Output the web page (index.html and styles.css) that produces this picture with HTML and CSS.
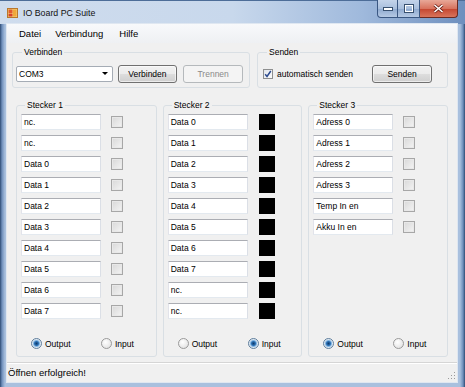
FILE: index.html
```html
<!DOCTYPE html>
<html lang="de">
<head>
  <meta charset="UTF-8" />
  <meta name="viewport" content="width=device-width, initial-scale=1.0"/>
  <title>IO Board PC Suite</title>
  <link rel="stylesheet" href="styles.css">
</head>
<body>
  <div class="window">
    <header class="titlebar">
      <svg class="app-icon" width="11" height="10" viewBox="0 0 11 10">
        <rect x="0.5" y="0.5" width="10" height="9" fill="#f3d27a" stroke="#b9772c"/>
        <rect x="1.5" y="1.5" width="4" height="4" fill="#e2592f"/>
        <rect x="6" y="1.5" width="3.5" height="7" fill="#f0a73a"/>
        <rect x="1.5" y="6" width="4" height="2.5" fill="#d8402a"/>
      </svg>
      <span class="title">IO Board PC Suite</span>
      <div class="caption-buttons">
        <span class="cap cap-min">
          <svg width="10" height="4" viewBox="0 0 10 4"><rect x="0.5" y="0.5" width="9" height="3" fill="#fff" stroke="#38506f"/></svg>
        </span>
        <span class="cap cap-max">
          <svg width="10" height="9" viewBox="0 0 10 9"><rect x="0.5" y="0.5" width="9" height="8" fill="none" stroke="#38506f"/><rect x="1.5" y="1.5" width="7" height="6" fill="none" stroke="#fff" stroke-width="1"/></svg>
        </span>
        <span class="cap cap-close">
          <svg width="11" height="9" viewBox="0 0 11 9"><path d="M1.5 1 L9.5 8 M9.5 1 L1.5 8" stroke="#6b2118" stroke-width="3"/><path d="M1.5 1 L9.5 8 M9.5 1 L1.5 8" stroke="#fff" stroke-width="1.6"/></svg>
        </span>
      </div>
    </header>

    <div class="client">
      <nav class="menubar">
        <span class="menu-item">Datei</span>
        <span class="menu-item">Verbindung</span>
        <span class="menu-item">Hilfe</span>
      </nav>

      <div class="top-row">
        <fieldset class="group group-connect">
          <legend>Verbinden</legend>
          <div class="combo">COM3<span class="combo-arrow"></span></div>
          <button class="btn">Verbinden</button>
          <button class="btn" disabled>Trennen</button>
        </fieldset>
        <fieldset class="group group-send">
          <legend>Senden</legend>
          <label class="check-label">
            <span class="check">
              <svg width="8" height="8" viewBox="0 0 8 8"><path d="M1.2 4.2 L3 6.4 L6.8 1" fill="none" stroke="#2c4a8e" stroke-width="1.5"/></svg>
            </span>
            automatisch senden
          </label>
          <button class="btn btn-send">Senden</button>
        </fieldset>
      </div>

      <div class="plugs">
        <fieldset class="group plug plug-1">
          <legend>Stecker 1</legend>
          <div class="pin"><span class="field">nc.</span><span class="box"></span></div>
          <div class="pin"><span class="field">nc.</span><span class="box"></span></div>
          <div class="pin"><span class="field">Data 0</span><span class="box"></span></div>
          <div class="pin"><span class="field">Data 1</span><span class="box"></span></div>
          <div class="pin"><span class="field">Data 2</span><span class="box"></span></div>
          <div class="pin"><span class="field">Data 3</span><span class="box"></span></div>
          <div class="pin"><span class="field">Data 4</span><span class="box"></span></div>
          <div class="pin"><span class="field">Data 5</span><span class="box"></span></div>
          <div class="pin"><span class="field">Data 6</span><span class="box"></span></div>
          <div class="pin"><span class="field">Data 7</span><span class="box"></span></div>
          <div class="modes">
            <span class="mode"><span class="radio on"></span>Output</span>
            <span class="mode"><span class="radio"></span>Input</span>
          </div>
        </fieldset>

        <fieldset class="group plug plug-2">
          <legend>Stecker 2</legend>
          <div class="pin"><span class="field">Data 0</span><span class="led"></span></div>
          <div class="pin"><span class="field">Data 1</span><span class="led"></span></div>
          <div class="pin"><span class="field">Data 2</span><span class="led"></span></div>
          <div class="pin"><span class="field">Data 3</span><span class="led"></span></div>
          <div class="pin"><span class="field">Data 4</span><span class="led"></span></div>
          <div class="pin"><span class="field">Data 5</span><span class="led"></span></div>
          <div class="pin"><span class="field">Data 6</span><span class="led"></span></div>
          <div class="pin"><span class="field">Data 7</span><span class="led"></span></div>
          <div class="pin"><span class="field">nc.</span><span class="led"></span></div>
          <div class="pin"><span class="field">nc.</span><span class="led"></span></div>
          <div class="modes">
            <span class="mode"><span class="radio"></span>Output</span>
            <span class="mode"><span class="radio on"></span>Input</span>
          </div>
        </fieldset>

        <fieldset class="group plug plug-3">
          <legend>Stecker 3</legend>
          <div class="pin"><span class="field">Adress 0</span><span class="box"></span></div>
          <div class="pin"><span class="field">Adress 1</span><span class="box"></span></div>
          <div class="pin"><span class="field">Adress 2</span><span class="box"></span></div>
          <div class="pin"><span class="field">Adress 3</span><span class="box"></span></div>
          <div class="pin"><span class="field">Temp In en</span><span class="box"></span></div>
          <div class="pin"><span class="field">Akku In en</span><span class="box"></span></div>
          <div class="modes">
            <span class="mode"><span class="radio on"></span>Output</span>
            <span class="mode"><span class="radio"></span>Input</span>
          </div>
        </fieldset>
      </div>

      <footer class="statusbar">
        Öffnen erfolgreich!
        <span class="grip"></span>
      </footer>
    </div>
  </div>
</body>
</html>
```

FILE: styles.css
```css
* {
  box-sizing: border-box;
}
body {
  margin: 0;
  font-family: "Liberation Sans", Arial, sans-serif;
  font-size: 8.5px;
  color: #000;
  background: #fff;
}

/* window frame */
.window {
  width: 465px;
  height: 387px;
  display: flex;
  flex-direction: column;
  background: linear-gradient(90deg, #2e4b74 0, #6f8fbb 2px, #a9c0de 5px, #a9c0de calc(100% - 5px), #6f8fbb calc(100% - 2px), #2e4b74 100%);
  overflow: hidden;
}
.titlebar {
  height: 24px;
  display: flex;
  align-items: center;
  padding-left: 7px;
  background: linear-gradient(90deg, #cfdced 0%, #c8d8ec 50%, #9fb9dc 78%, #6e8fbe 100%);
  border-top: 1px solid #4d6d98;
}
.app-icon {
  flex: none;
  margin-right: 5px;
}
.title {
  font-size: 8.8px;
  color: #111;
}
.caption-buttons {
  display: flex;
  align-self: flex-start;
  margin-left: auto;
  margin-right: 7px;
  margin-top: -1px;
}
.cap {
  height: 18px;
  display: flex;
  align-items: center;
  justify-content: center;
  border: 1px solid #3a5782;
  border-top: none;
}
.cap-min {
  width: 21px;
  border-radius: 0 0 0 4px;
  background: linear-gradient(#c4d4ea, #a9bfdd 50%, #8ea9cf 51%, #b5c9e4);
}
.cap-max {
  width: 22px;
  border-left: none;
  background: linear-gradient(#c4d4ea, #a9bfdd 50%, #8ea9cf 51%, #b5c9e4);
}
.cap-close {
  width: 38px;
  border-left: none;
  border-radius: 0 0 4px 0;
  border-color: #6c2a21;
  background: linear-gradient(#e8a898, #d8735e 50%, #c4452f 51%, #d9745b);
}

/* client area */
.client {
  flex: 1;
  margin: 0 8px 5px 7px;
  background: #f0f0f0;
  display: flex;
  flex-direction: column;
  box-shadow: 0 0 0 1px #dfe7f1;
}
.menubar {
  height: 19px;
  display: flex;
  align-items: center;
  padding-left: 5px;
  font-size: 9.5px;
  background: linear-gradient(#f8f9fb, #eef0f3);
}
.menu-item {
  padding: 0 7px;
}
.menu-item:nth-child(2) {
  padding-right: 9px;
}

/* group boxes */
.group {
  margin: 0;
  border: 1px solid #d9dfe4;
  border-radius: 3px;
  min-width: 0;
}
.group legend {
  padding: 0 2px;
  margin-left: 4px;
  line-height: 10px;
}
.top-row {
  display: flex;
  gap: 7px;
  padding: 4px 9px 0 5px;
}
.group-connect,
.group-send {
  height: 41px;
  display: flex;
  align-items: center;
  padding: 3px 6px 0 3px;
}
.group-connect {
  width: 238px;
  gap: 5px;
}
.group-connect legend {
  margin-left: 6px;
}
.group-send {
  flex: 1;
  padding-left: 5px;
}

.combo {
  width: 97px;
  height: 16px;
  display: flex;
  align-items: center;
  padding-left: 2px;
  background: #fff;
  border: 1px solid #a5acb5;
  border-radius: 2px;
}
.combo-arrow {
  margin-left: auto;
  margin-right: 4px;
  border-left: 3px solid transparent;
  border-right: 3px solid transparent;
  border-top: 3px solid #000;
}
.btn {
  width: 60px;
  height: 18px;
  padding: 0;
  font: inherit;
  color: #000;
  border: 1px solid #707070;
  border-radius: 3px;
  background: linear-gradient(#f2f2f2, #ebebeb 50%, #dddddd 51%, #cfcfcf);
  box-shadow: inset 0 0 0 1px rgba(255, 255, 255, 0.6);
}
.btn + .btn {
  margin-left: 1px;
}
.btn:disabled {
  color: #8a8a8a;
  border-color: #b5b9bc;
  background: #f4f4f4;
  box-shadow: none;
}

.check-label {
  display: flex;
  align-items: center;
  gap: 4px;
}
.check {
  width: 10px;
  height: 10px;
  display: flex;
  align-items: center;
  justify-content: center;
  border: 1px solid #8e8f8f;
  background: linear-gradient(135deg, #e2e6eb, #fbfbfb);
}
.btn-send {
  margin-left: 19px;
}

/* plugs */
.plugs {
  display: flex;
  gap: 6px;
  padding: 12px 9px 0;
}
.plug {
  width: 140px;
  height: 257px;
  display: flex;
  flex-direction: column;
  padding: 4px 4px 7px;
}
.plug-1 {
  width: 141px;
}
.pin {
  display: flex;
  align-items: center;
  gap: 10px;
  height: 16px;
  margin-bottom: 5px;
}
.field {
  width: 80px;
  height: 16px;
  padding-left: 2px;
  line-height: 14px;
  background: #fff;
  border: 1px solid;
  border-color: #abadb3 #dbdfe6 #e3e9ef #e2e3ea;
  white-space: nowrap;
}
.box {
  width: 12px;
  height: 12px;
  border: 1px solid #a7a7a7;
  background: linear-gradient(135deg, #d8d8d8, #f4f4f4);
  box-shadow: inset 0 0 0 1px #e8e8e8;
}
.led {
  width: 16px;
  height: 16px;
  margin-left: 1px;
  background: #000;
}

.modes {
  margin-top: auto;
  display: flex;
  align-items: center;
  padding-left: 10px;
  height: 11px;
}
.mode {
  display: flex;
  align-items: center;
  gap: 3px;
}
.mode:first-child {
  width: 70px;
}
.radio {
  width: 11px;
  height: 11px;
  border-radius: 50%;
  border: 1px solid #9a9a9a;
  background: radial-gradient(circle at 40% 35%, #ffffff, #dcdcdc);
}
.radio.on {
  border-color: #5f7e9c;
  background: radial-gradient(circle at 50% 50%, #0e3a6b 0, #2b6fb2 2px, #7fb2e0 3px, #d9e6f1 4px, #f3f6f9 5px);
}

/* status bar */
.statusbar {
  margin-top: 5px;
  height: 20px;
  display: flex;
  align-items: center;
  padding-left: 1px;
  font-size: 9.5px;
  border-top: 1px solid #d5d5d5;
  box-shadow: inset 0 1px 0 #fff;
  position: relative;
}
.grip {
  position: absolute;
  right: 2px;
  bottom: 3px;
  width: 8px;
  height: 8px;
  background:
    radial-gradient(circle, #9a9a9a 0.8px, transparent 1px) 0 0 / 3px 3px;
  clip-path: polygon(100% 0, 100% 100%, 0 100%);
}
```
